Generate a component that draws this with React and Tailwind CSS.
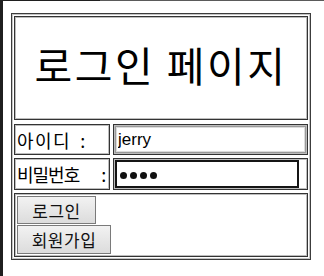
export default function App() {
  const cell = "border border-[#333333] shadow-[inset_0_0_0_1px_#bdbdbd]";
  return (
    <div className="w-[324px] h-[276px] bg-white flex flex-col overflow-hidden font-['Noto_Sans_CJK_KR',sans-serif] text-black">
      <div className="flex h-px shrink-0">
        <div className="w-[100px] bg-[#1f1f1f]" />
        <div className="flex-1 bg-[#5a5a5a]" />
      </div>
      <div className="flex flex-1">
        <div className="w-[3px] bg-[#1f1f1f]" />
        <div className="pl-[8px] pt-[12px]">
          <div className="w-[300px] h-[247px] border border-[#3c3c3c] shadow-[inset_0_0_0_1px_#c4c4c4] p-[2px] flex flex-col">
            <div className={`${cell} h-[104px] flex items-center justify-center pb-[8px]`}>
              <h1 className="text-[41px] leading-none font-normal tracking-[2.5px]">로그인 페이지</h1>
            </div>
            <div className="mt-[4px] h-[31px] flex gap-[3px]">
              <div className={`${cell} w-[96px] flex items-center pl-[2px] text-[18px] leading-none`}>
                <span className="tracking-[1.5px]">아이디</span>
                <span className="ml-[9px]">:</span>
              </div>
              <div className={`${cell} flex-1 p-[1px] flex`}>
                <input
                  readOnly
                  value="jerry"
                  className="w-[191px] h-[27px] border border-[#9a9a9a] shadow-[inset_0_0_0_1px_#dcdcdc] px-[2px] text-[17px] font-['Liberation_Sans',Arial,sans-serif] text-black outline-none bg-white"
                />
              </div>
            </div>
            <div className="mt-[3px] h-[32px] flex gap-[3px]">
              <div className={`${cell} w-[96px] flex items-center pl-[2px] text-[18px] leading-none`}>
                <span className="tracking-[-1px]">비밀번호</span>
                <span className="ml-[22px]">:</span>
              </div>
              <div className={`${cell} flex-1 p-[1px] flex`}>
                <div className="w-[184px] h-[28px] border-2 border-[#151515] flex items-center gap-[3px] pl-[3px] pt-[3px]">
                  <span className="w-[7px] h-[7px] rounded-full bg-[#111]" />
                  <span className="w-[7px] h-[7px] rounded-full bg-[#111]" />
                  <span className="w-[7px] h-[7px] rounded-full bg-[#111]" />
                  <span className="w-[7px] h-[7px] rounded-full bg-[#111]" />
                </div>
              </div>
            </div>
            <div className={`${cell} mt-[3px] h-[64px] p-[2px] flex flex-col items-start gap-[1px]`}>
              <button className="w-[79px] h-[28px] border border-[#7a7a7a] bg-linear-to-b from-[#f2f2f2] to-[#dcdcdc] text-[17px] leading-none tracking-[0.5px] text-[#111] flex items-center justify-center">
                로그인
              </button>
              <button className="w-[94px] h-[29px] border border-[#7a7a7a] bg-linear-to-b from-[#f2f2f2] to-[#dcdcdc] text-[17px] leading-none tracking-[0.5px] text-[#111] flex items-center justify-center">
                회원가입
              </button>
            </div>
          </div>
        </div>
      </div>
    </div>
  );
}
